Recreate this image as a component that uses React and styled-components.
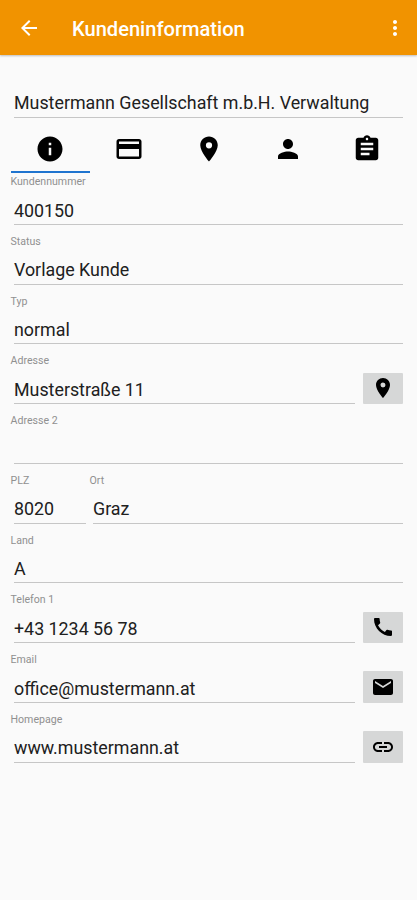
import React from "react";
import styled, { createGlobalStyle } from "styled-components";
import {
  MdArrowBack,
  MdMoreVert,
  MdInfo,
  MdCreditCard,
  MdLocationOn,
  MdPerson,
  MdAssignment,
  MdCall,
  MdEmail,
  MdLink,
} from "react-icons/md";

const GlobalStyle = createGlobalStyle`
  * {
    box-sizing: border-box;
  }
  body {
    margin: 0;
    background-color: #fafafa;
    font-family: Roboto, "Liberation Sans", sans-serif;
  }
  svg {
    display: block;
    flex: none;
  }
`;

const Container = styled.div`
  min-height: 900px;
  background-color: #fafafa;
`;

const Header = styled.header`
  display: flex;
  align-items: center;
  height: 55px;
  padding: 0 10px 0 17px;
  background-color: #f19300;
  color: #fff;
  box-shadow: 0 1px 2px rgba(0, 0, 0, 0.25);
`;

const Title = styled.h1`
  flex: 1;
  margin: 2px 0 0 31px;
  font-size: 20.1px;
  font-weight: 500;
  line-height: 24px;
`;

const IconButton = styled.button`
  padding: 0;
  border: none;
  background: none;
  color: inherit;
  font-size: 24px;
`;

const Content = styled.main`
  padding: 33px 10.5px 0;
`;

const Value = styled.div`
  flex: 1;
  height: ${(props) => props.$height || "36.75px"};
  margin: 0 3.5px;
  padding-top: ${(props) => props.$top || "9.5px"};
  border-bottom: 1px solid #c6c6c6;
  color: #202020;
  font-size: 17.83px;
  line-height: 26px;
  white-space: nowrap;
`;

const Tabs = styled.nav`
  display: flex;
  height: 55px;
`;

const Tab = styled.button`
  flex: 1;
  display: flex;
  justify-content: center;
  padding: 16px 0 0;
  border: none;
  border-bottom: 2px solid ${(props) => (props.$active ? "#1f74cf" : "transparent")};
  background: none;
  color: #000;
  font-size: 30px;
`;

const Form = styled.div`
  display: flex;
  flex-direction: column;
  gap: 9px;
  padding-top: 1px;
`;

const Row = styled.div`
  display: flex;
  align-items: flex-end;
`;

const Field = styled.div`
  flex: ${(props) => (props.$width ? `0 0 ${props.$width}` : "1")};
`;

const Label = styled.div`
  height: 14px;
  color: #909090;
  font-size: 10.6px;
  line-height: 15px;
`;

const Action = styled.button`
  display: flex;
  align-items: center;
  justify-content: center;
  width: 40px;
  height: 31.5px;
  margin: 0 3.5px 0 4.5px;
  padding: 0;
  border: none;
  border-radius: 1px;
  background-color: #d6d7d7;
  color: #000;
  font-size: 24px;
`;

const tabs = [MdInfo, MdCreditCard, MdLocationOn, MdPerson, MdAssignment];

const rows = [
  { fields: [{ label: "Kundennummer", value: "400150" }] },
  { fields: [{ label: "Status", value: "Vorlage Kunde" }] },
  { fields: [{ label: "Typ", value: "normal" }] },
  {
    fields: [{ label: "Adresse", value: "Musterstraße 11" }],
    action: MdLocationOn,
  },
  { fields: [{ label: "Adresse 2", value: "" }] },
  {
    fields: [
      { label: "PLZ", value: "8020", width: "79px" },
      { label: "Ort", value: "Graz" },
    ],
  },
  { fields: [{ label: "Land", value: "A" }] },
  { fields: [{ label: "Telefon 1", value: "+43 1234 56 78" }], action: MdCall },
  {
    fields: [{ label: "Email", value: "office@mustermann.at" }],
    action: MdEmail,
  },
  {
    fields: [{ label: "Homepage", value: "www.mustermann.at" }],
    action: MdLink,
  },
];

function App() {
  return (
    <Container>
      <GlobalStyle />
      <Header>
        <IconButton>
          <MdArrowBack />
        </IconButton>
        <Title>Kundeninformation</Title>
        <IconButton>
          <MdMoreVert />
        </IconButton>
      </Header>
      <Content>
        <Value $height="30px" $top="2px">
          Mustermann Gesellschaft m.b.H. Verwaltung
        </Value>
        <Tabs>
          {tabs.map((Icon, index) => (
            <Tab key={index} $active={index === 0}>
              <Icon />
            </Tab>
          ))}
        </Tabs>
        <Form>
          {rows.map(({ fields, action: Icon }) => (
            <Row key={fields[0].label}>
              {fields.map((field) => (
                <Field key={field.label} $width={field.width}>
                  <Label>{field.label}</Label>
                  <Value>{field.value}</Value>
                </Field>
              ))}
              {Icon && (
                <Action>
                  <Icon />
                </Action>
              )}
            </Row>
          ))}
        </Form>
      </Content>
    </Container>
  );
}

export default App;
